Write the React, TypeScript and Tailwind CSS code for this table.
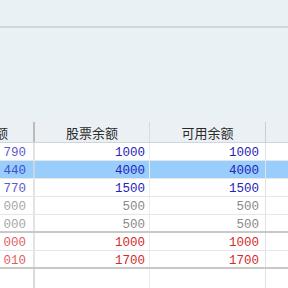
const rows = [
  { a: '790', b: '1000', c: '1000', tone: 'blue' },
  { a: '440', b: '4000', c: '4000', tone: 'blue', selected: true },
  { a: '770', b: '1500', c: '1500', tone: 'blue' },
  { a: '000', b: '500', c: '500', tone: 'gray' },
  { a: '000', b: '500', c: '500', tone: 'gray', strong: true },
  { a: '000', b: '1000', c: '1000', tone: 'red' },
  { a: '010', b: '1700', c: '1700', tone: 'red', strong: true },
];

const toneClass: Record<string, string> = {
  blue: 'text-[#2424b8]',
  gray: 'text-[#8a8a8a]',
  red: 'text-[#d22c2c]',
};

export default function App() {
  return (
    <div
      className="w-[288px] h-[288px] overflow-hidden bg-white flex flex-col"
      style={{ fontFamily: '"Noto Sans CJK SC", "Noto Sans", sans-serif' }}
    >
      {/* toolbar strip */}
      <div className="h-[26px] bg-[#eaf1f5] shrink-0" />
      <div className="h-[2px] bg-[#cfd6dc] shrink-0" />
      <div className="h-[94px] bg-[#eaf1f5] shrink-0" />

      {/* grid, scrolled a bit to the right */}
      <div className="flex-1 overflow-hidden">
        <div className="ml-[-69px] w-max h-full flex flex-col">
          <div className="flex h-[21px] bg-[#eaf0f4] border-b border-[#cfd5da] text-[13px] text-[#2a2a2a] leading-[21px]">
            <div className="w-[104px] border-r-2 border-[#bcbcbc] text-center">股份余额</div>
            <div className="w-[115px] border-r border-[#d6dce0] text-center">股票余额</div>
            <div className="w-[116px] border-r border-[#c9ced2] text-center">可用余额</div>
            <div className="w-[100px] text-center pl-[4px]">冻结数量</div>
          </div>

          {rows.map((r, i) => (
            <div
              key={i}
              className={`flex h-[18px] leading-[20px] text-[12.5px] ${toneClass[r.tone]} ${
                r.selected ? 'bg-[#99cdfc]' : 'bg-white'
              } ${r.strong ? 'border-b-2 border-[#c8c8c8]' : 'border-b border-[#e6e6e6]'}`}
              style={{ fontFamily: '"Liberation Mono", monospace' }}
            >
              <div className="w-[104px] border-r-2 border-[#dadada] text-right pr-[7px] opacity-75">{r.a}</div>
              <div className="w-[115px] border-r border-[#ececec] text-right pr-[4px]">{r.b}</div>
              <div className="w-[116px] border-r border-[#e2e2e2] text-right pr-[6px]">{r.c}</div>
              <div className="w-[100px]" />
            </div>
          ))}

          {/* empty space under the last row */}
          <div className="flex flex-1">
            <div className="w-[104px] border-r-2 border-[#dadada]" />
            <div className="w-[115px] border-r border-[#ececec]" />
            <div className="w-[116px] border-r border-[#e2e2e2]" />
            <div className="w-[100px]" />
          </div>
        </div>
      </div>
    </div>
  );
}
